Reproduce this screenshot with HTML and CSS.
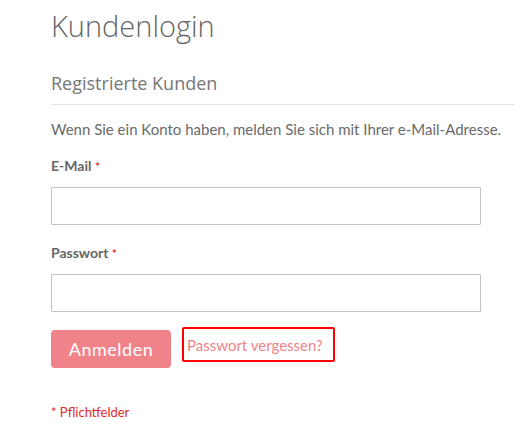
FILE: index.html
```html
<!DOCTYPE html>
<html lang="de">
<head>
<meta charset="utf-8">
<title>Kundenlogin</title>
<link rel="stylesheet" href="styles.css">
</head>
<body>
<main class="page">
  <h1 class="title">Kundenlogin</h1>
  <section class="block">
    <h2 class="block-title">Registrierte Kunden</h2>
    <p class="intro">Wenn Sie ein Konto haben, melden Sie sich mit Ihrer e-Mail-Adresse.</p>
    <form class="form">
      <div class="field">
        <label class="label">E-Mail <span class="req">*</span></label>
        <input class="input" type="email">
      </div>
      <div class="field">
        <label class="label">Passwort <span class="req">*</span></label>
        <input class="input" type="password">
      </div>
      <div class="actions">
        <button class="btn" type="button">Anmelden</button>
        <a class="forgot" href="#">Passwort vergessen?</a>
      </div>
      <p class="note">* Pflichtfelder</p>
    </form>
  </section>
</main>
</body>
</html>
```
FILE: styles.css
```css
html, body {
  margin: 0;
  padding: 0;
  background: #fff;
}
body {
  font-family: Lato, "Open Sans", sans-serif;
  color: #666;
}
.page {
  padding-left: 51px;
}
.title {
  margin: 0;
  padding-top: 8px;
  font-family: "Open Sans", sans-serif;
  font-weight: 300;
  font-size: 29px;
  line-height: 36px;
  color: #666;
}
.block-title {
  margin: 28px 0 0;
  padding-bottom: 10px;
  border-bottom: 1px solid #e6e6e6;
  font-family: "Open Sans", sans-serif;
  font-weight: 400;
  font-size: 18px;
  line-height: 22px;
  color: #777;
}
.intro {
  margin: 14px 0 0;
  font-size: 15px;
  line-height: 20px;
  color: #6a6a6a;
}
.form {
  margin-top: 17px;
}
.field + .field {
  margin-top: 18px;
}
.label {
  display: block;
  font-size: 14px;
  font-weight: 700;
  line-height: 20px;
  color: #666;
  margin-bottom: 10px;
}
.req {
  color: #e02b27;
  font-size: 12px;
}
.input {
  display: block;
  box-sizing: border-box;
  width: 430px;
  height: 38px;
  margin: 0;
  border: 1px solid #c2c2c2;
  border-radius: 1px;
  background: #fff;
}
.actions {
  display: flex;
  align-items: flex-start;
  gap: 11px;
  margin-top: 15px;
}
.btn {
  box-sizing: border-box;
  width: 120px;
  height: 38px;
  border: 0;
  border-radius: 4px;
  background: #f08389;
  color: #fff;
  font-family: Lato, sans-serif;
  font-size: 18px;
  letter-spacing: 0.5px;
  margin-top: 3px;
  padding: 0;
}
.forgot {
  display: block;
  box-sizing: border-box;
  height: 35px;
  padding: 6px 10px 0 3px;
  border: 2px solid #f00;
  border-radius: 2px;
  color: #f08389;
  font-size: 15px;
  line-height: 20px;
  text-decoration: none;
}
.note {
  margin: 36px 0 0;
  font-size: 13px;
  line-height: 16px;
  color: #e02b27;
}
```
